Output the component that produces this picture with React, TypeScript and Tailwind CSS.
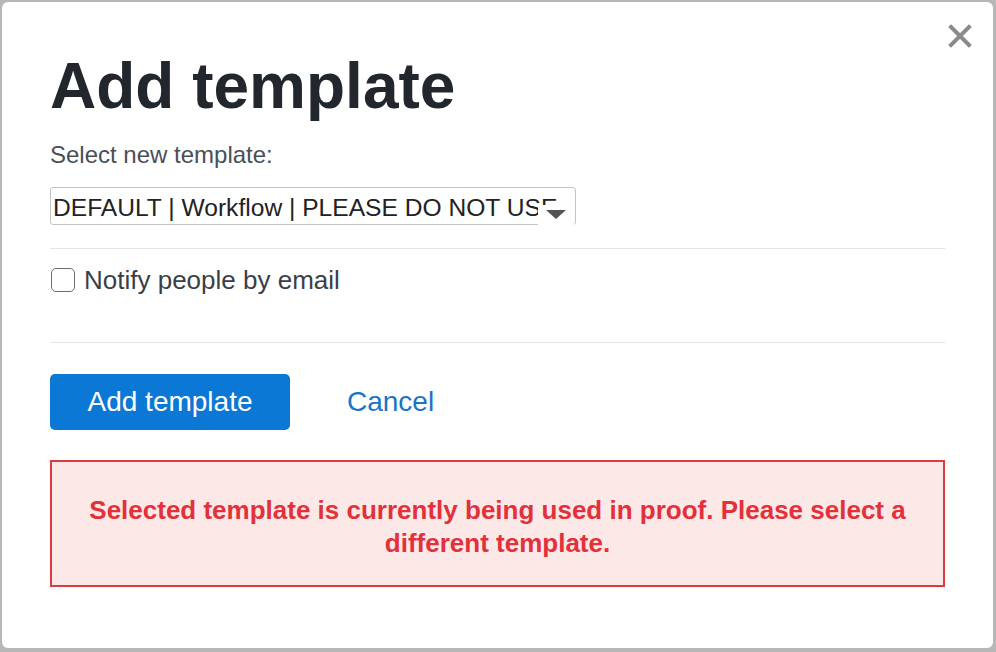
import { useState } from 'react';

export default function App() {
  const [notify, setNotify] = useState(false);

  return (
    <div className="w-[996px] h-[652px] bg-[#b7b7b7] p-[2px] pr-[3px] pb-[4px] font-['Liberation_Sans',Arial,sans-serif]">
      <div className="relative w-full h-full bg-white rounded-[6px] px-[48px] pt-[48px]">
        <button className="absolute right-[21px] top-[22px] w-[24px] h-[24px] cursor-pointer" aria-label="Close">
          <svg viewBox="0 0 24 24" className="w-[24px] h-[24px]">
            <path d="M3 3 L21 21 M21 3 L3 21" stroke="#8b8b8b" strokeWidth="4" strokeLinecap="square" />
          </svg>
        </button>

        <h1 className="text-[64px] leading-[72px] font-bold text-[#22272e]">Add template</h1>

        <label className="block mt-[19px] text-[24px] leading-[28px] text-[#4a4f57]">
          Select new template:
        </label>

        <div className="relative mt-[18px] w-[526px] h-[38px] border border-[#c4c4c4] rounded-[3px]">
          <div className="h-[36px] overflow-hidden whitespace-nowrap pl-[2px] pt-[1px] text-[24.6px] leading-[38px] text-[#222]">
            DEFAULT | Workflow | PLEASE DO NOT USE
          </div>
          <div className="absolute right-[1px] bottom-[-2px] w-[36px] h-[21px] bg-white flex items-start justify-center pt-[5px]">
            <svg viewBox="0 0 20 9" className="w-[20px] h-[9px]">
              <path d="M0 0 L20 0 L10 9 Z" fill="#555" />
            </svg>
          </div>
        </div>

        <div className="mt-[23px] h-px bg-[#e4e4e4]" />

        <label className="mt-[19px] flex items-center gap-[9px] cursor-pointer">
          <span
            onClick={() => setNotify(!notify)}
            className="ml-[1px] w-[24px] h-[24px] rounded-[5px] border-[1.5px] border-[#6e6e6e] bg-white"
          />
          <span className="text-[26px] leading-[24px] text-[#3a3f47]">Notify people by email</span>
        </label>

        <div className="mt-[50px] h-px bg-[#e4e4e4]" />

        <div className="mt-[31px] flex items-center">
          <button className="w-[240px] h-[56px] rounded-[5px] bg-[#0b78d6] text-white text-[28px] cursor-pointer">
            Add template
          </button>
          <button className="ml-[57px] text-[28px] text-[#1a74c8] cursor-pointer">Cancel</button>
        </div>

        <div className="mt-[30px] h-[127px] border-2 border-[#e03a40] bg-[#fde8e8] flex items-center justify-center px-[30px] pt-[6px] text-center">
          <p className="text-[26px] leading-[33px] font-bold text-[#e2313a]">
            Selected template is currently being used in proof. Please select a different template.
          </p>
        </div>
      </div>
    </div>
  );
}
